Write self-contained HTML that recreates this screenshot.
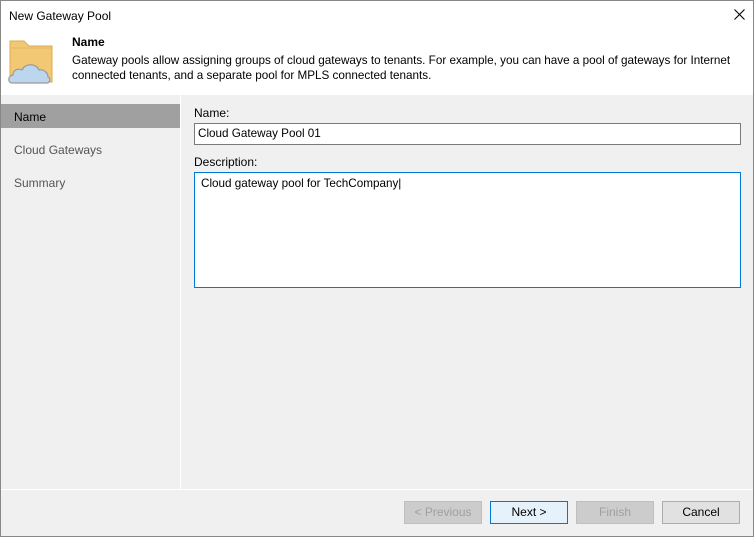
<!DOCTYPE html>
<html><head><style>
*{margin:0;padding:0;box-sizing:border-box}
body{width:754px;height:537px;background:#f0f0f0;font-family:"Liberation Sans",sans-serif;font-size:12px;color:#000;position:relative;overflow:hidden}
.win{position:absolute;left:0;top:0;width:754px;height:537px;border:1px solid #888;}
.abs{position:absolute}
.btn{position:absolute;top:501px;width:78px;height:23px;border:1px solid #adadad;background:#e1e1e1;text-align:center;line-height:21px}
</style></head><body>
<div class="win"></div>
<div class="abs" style="left:1px;top:1px;width:752px;height:94px;background:#fff"></div>
<div class="abs" style="left:9px;top:9px">New Gateway Pool</div>
<svg class="abs" style="left:734px;top:9px" width="11" height="11"><path d="M0.5 0.5L10.5 10.5M10.5 0.5L0.5 10.5" stroke="#000" stroke-width="1.1"/></svg>
<svg class="abs" style="left:6px;top:39px" width="50" height="46" viewBox="0 0 50 46">
<path d="M4 2h14l5 5H46v36H4z" fill="#f2c875" stroke="#dcab4d"/>
<path d="M4 9H46" stroke="#e7b75a"/>
<path d="M6 44c-4 0-5-7 1-8 0-5 5-7 9-5 3-7 14-7 17 0 5-1 9 3 9 7 3 1 2 6-1 6z" fill="#bcd6ef" stroke="#999" stroke-width="1.2"/>
</svg>
<div class="abs" style="left:72px;top:35px;font-weight:bold">Name</div>
<div class="abs" style="left:72px;top:53px;line-height:15px;width:680px;font-size:11.7px">Gateway pools allow assigning groups of cloud gateways to tenants. For example, you can have a pool of gateways for Internet connected tenants, and a separate pool for MPLS connected tenants.</div>
<div class="abs" style="left:180px;top:95px;width:1px;height:394px;background:#fff"></div>
<div class="abs" style="left:1px;top:104px;width:179px;height:24px;background:#a0a0a0"></div>
<div class="abs" style="left:14px;top:110px">Name</div>
<div class="abs" style="left:14px;top:143px;color:#555">Cloud Gateways</div>
<div class="abs" style="left:14px;top:176px;color:#555">Summary</div>
<div class="abs" style="left:194px;top:106px">Name:</div>
<div class="abs" style="left:194px;top:123px;width:547px;height:22px;background:#fff;border:1px solid #7a7a7a;padding:3px 3px;font-size:11.7px">Cloud Gateway Pool 01</div>
<div class="abs" style="left:194px;top:155px">Description:</div>
<div class="abs" style="left:194px;top:172px;width:547px;height:116px;background:#fff;border:1px solid #0078d7;padding:4px 6px;font-size:11.7px">Cloud gateway pool for TechCompany|</div>
<div class="abs" style="left:1px;top:489px;width:752px;height:1px;background:#fff"></div>
<div class="btn" style="left:404px;color:#a0a0a0;background:#cccccc;border-color:#bfbfbf">&lt; Previous</div>
<div class="btn" style="left:490px;background:#e5f1fb;border-color:#0078d7">Next &gt;</div>
<div class="btn" style="left:576px;color:#a0a0a0;background:#cccccc;border-color:#bfbfbf">Finish</div>
<div class="btn" style="left:662px">Cancel</div>
</body></html>
